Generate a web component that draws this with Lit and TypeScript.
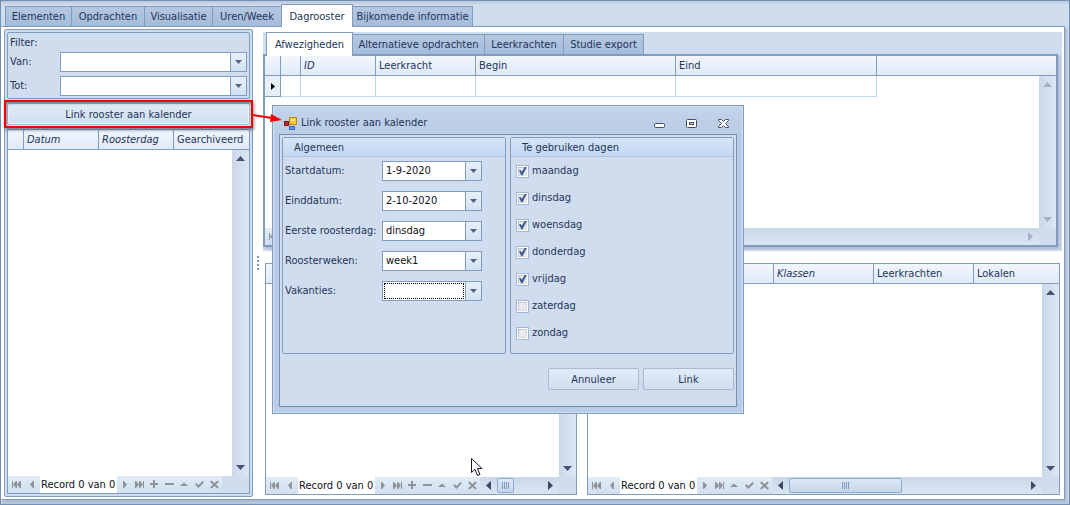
import { LitElement, html, svg, css, nothing, TemplateResult } from "lit";
import { customElement, state } from "lit/decorators.js";
import { classMap } from "lit/directives/class-map.js";
import { styleMap } from "lit/directives/style-map.js";

interface Tab {
  label: string;
  width: number;
}

interface Column {
  label: string;
  width?: number;
  italic?: boolean;
}

const mainTabs: Tab[] = [
  { label: "Elementen", width: 67 },
  { label: "Opdrachten", width: 74 },
  { label: "Visualisatie", width: 69 },
  { label: "Uren/Week", width: 70 },
  { label: "Dagrooster", width: 72 },
  { label: "Bijkomende informatie", width: 121 },
];

const subTabs: Tab[] = [
  { label: "Afwezigheden", width: 87 },
  { label: "Alternatieve opdrachten", width: 133 },
  { label: "Leerkrachten", width: 80 },
  { label: "Studie export", width: 81 },
];

const rosterColumns: Column[] = [
  { label: "", width: 16 },
  { label: "Datum", width: 75, italic: true },
  { label: "Roosterdag", width: 75, italic: true },
  { label: "Gearchiveerd" },
];

const absenceColumns: Column[] = [
  { label: "", width: 16 },
  { label: "", width: 20 },
  { label: "ID", width: 75, italic: true },
  { label: "Leerkracht", width: 100 },
  { label: "Begin", width: 200 },
  { label: "Eind", width: 201 },
  { label: "" },
];

const middleColumns: Column[] = [{ label: "", width: 16 }, { label: "" }];

const lessonColumns: Column[] = [
  { label: "", width: 186 },
  { label: "Klassen", width: 100, italic: true },
  { label: "Leerkrachten", width: 100 },
  { label: "Lokalen" },
];

const dialogFields = [
  { id: "start", label: "Startdatum:", value: "1-9-2020" },
  { id: "end", label: "Einddatum:", value: "2-10-2020" },
  { id: "first", label: "Eerste roosterdag:", value: "dinsdag" },
  { id: "weeks", label: "Roosterweken:", value: "week1" },
  { id: "holidays", label: "Vakanties:", value: "" },
];

const days = [
  { name: "maandag", checked: true },
  { name: "dinsdag", checked: true },
  { name: "woensdag", checked: true },
  { name: "donderdag", checked: true },
  { name: "vrijdag", checked: true },
  { name: "zaterdag", checked: false },
  { name: "zondag", checked: false },
];

const glyphs: Record<string, TemplateResult> = {
  first: svg`<path d="M1 1h1v7h-1zM5 1v7h1v-7zM5 1v7L2 4.500zM9 1v7h1v-7zM9 1v7L6 4.500z"/>`,
  prev: svg`<path d="M7 1v7h-1L3 4.500 6 1z"/>`,
  next: svg`<path d="M4 1v7h1L8 4.500 5 1z"/>`,
  last: svg`<path d="M9 1h1v7h-1zM5 1v7h1L9 4.500 6 1zM1 1v7h1L5 4.500 2 1z"/>`,
  add: svg`<path d="M4 0h2v8h-2zM1 3h8v2h-8z"/>`,
  remove: svg`<path d="M1 3h9v2h-9z"/>`,
  edit: svg`<path d="M1 6L5 2.500 9 6z"/>`,
  accept: svg`<path d="M1 4.500L2.500 3.200 4.500 5 8.500 1 10 2.300 4.500 8z"/>`,
  cancel: svg`<path d="M1 1.800L2.600 0.500 5.500 3.200 8.400 0.500 10 1.800 7 4.500 10 7.400 8.400 8.600 5.500 5.900 2.600 8.600 1 7.400 4 4.500z"/>`,
};

const navTitles: Record<string, string> = {
  first: "Eerste",
  prev: "Vorige",
  next: "Volgende",
  last: "Laatste",
  add: "Toevoegen",
  remove: "Verwijderen",
  edit: "Bewerken",
  accept: "Opslaan",
  cancel: "Annuleren",
};

@customElement("app-root")
export class AppRoot extends LitElement {
  @state() private mainTab = "Dagrooster";
  @state() private subTab = "Afwezigheden";

  static styles = css`
    :host {
      display: block;
      --line: #829cc0;
      --face: #d0ddee;
      --ink: #24355a;
      --glyph: #8f9297;
      --bar: linear-gradient(#c9d8e9, #d9e6f3);
      font: 11px/14px "DejaVu Sans Condensed", "Noto Sans", sans-serif;
      color: var(--ink);
    }
    * {
      box-sizing: border-box;
    }
    button,
    select {
      font: inherit;
      color: inherit;
      margin: 0;
      padding: 0;
      border: 0;
      border-radius: 0;
      background: none;
      appearance: none;
      outline: none;
    }
    svg {
      display: block;
    }
    .window {
      position: relative;
      min-height: 100vh;
      display: flex;
      flex-direction: column;
      border: 1px solid #7390b2;
      background: linear-gradient(#b9c8dc, var(--face) 4px, var(--face) calc(100% - 6px), #b9c8dc);
      overflow: hidden;
    }
    .tabs {
      display: flex;
      align-items: flex-end;
    }
    .tabs.main {
      padding: 3px 0 0 4px;
    }
    .tabs.sub {
      padding-left: 3px;
    }
    .tab {
      height: 20px;
      margin-right: -1px;
      padding-top: 1px;
      border: 1px solid var(--line);
      border-bottom: 0;
      background: linear-gradient(#b4c8e1, #a5bbd8);
      white-space: nowrap;
      flex: none;
    }
    .tab.active {
      height: 23px;
      margin-bottom: -1px;
      background: #fff;
      position: relative;
      z-index: 1;
    }
    .tabs.sub .tab.active {
      margin-bottom: -2px;
      height: 24px;
    }
    .page {
      flex: 1;
      display: grid;
      grid-template-columns: 249px 10px minmax(0, 1fr);
      margin: 0 4px 4px 0;
      padding: 2px;
      background: #fff;
      border: 1px solid var(--line);
      border-left-color: #fff;
      box-shadow: 2px 2px 3px #a8b8ce;
    }
    .side {
      display: flex;
      flex-direction: column;
      gap: 4px;
      padding: 2px;
      border: 1px solid var(--line);
      border-radius: 2px;
      background: var(--face);
    }
    .filter {
      display: grid;
      grid-template-columns: 50px minmax(0, 1fr);
      grid-template-rows: 15px 20px 20px;
      row-gap: 4px;
      align-items: center;
      padding: 0 2px 2px;
      border: 1px solid var(--line);
      border-radius: 2px;
    }
    .filter .heading {
      grid-column: 1 / -1;
      margin-bottom: -4px;
    }
    .combo {
      display: grid;
      grid-template-columns: minmax(0, 1fr) 16px;
      height: 20px;
      border: 1px solid var(--line);
      background: #fff;
    }
    .combo select {
      grid-area: 1 / 1 / 2 / 3;
      padding: 0 18px 0 3px;
      color: #101020;
    }
    .combo .drop {
      grid-area: 1 / 2 / 2 / 3;
      display: grid;
      place-items: center;
      border-left: 1px solid var(--line);
      background: linear-gradient(#e6f0fa, #d3e1f1);
      pointer-events: none;
      fill: #4f6288;
    }
    .combo.focused select {
      margin: 1px 17px 1px 1px;
      border: 1px dotted #000;
    }
    .push {
      height: 22px;
      padding-top: 1px;
      border: 1px solid #a9b9d1;
      border-radius: 2px;
      background: linear-gradient(#e0ecf8, #cfdded);
    }
    .marked {
      position: relative;
      display: grid;
    }
    .marked .push {
      background: linear-gradient(#dfebf7, #d0deee);
      box-shadow: inset 0 0 0 1px #eef4fb;
    }
    .marked::after {
      content: "";
      position: absolute;
      inset: -3px;
      border: 2px solid #f30000;
      box-shadow: 1px 2px 3px rgba(60, 60, 70, 0.6), inset 1px 2px 2px rgba(60, 60, 70, 0.5);
      pointer-events: none;
    }
    .sheet {
      flex: 1;
      min-height: 0;
      display: flex;
      flex-direction: column;
      border: 1px solid var(--line);
      background: #fff;
    }
    .sheet.framed {
      border-width: 2px;
      box-shadow: 2px 2px 3px #a8b8ce;
    }
    .body {
      flex: 1;
      display: grid;
      grid-template-columns: minmax(0, 1fr) 17px;
    }
    table {
      width: 100%;
      border-collapse: separate;
      border-spacing: 0;
      table-layout: fixed;
      align-self: start;
    }
    th {
      height: 20px;
      padding: 0 0 0 3px;
      border-right: 1px solid var(--line);
      border-bottom: 1px solid var(--line);
      background: linear-gradient(#f2f6fd, #dfeaf8);
      font-weight: normal;
      text-align: left;
      white-space: nowrap;
    }
    th:last-child {
      border-right: 0;
    }
    td {
      height: 21px;
      padding: 0;
      border-right: 1px solid #c0d6f6;
      border-bottom: 1px solid #c0d6f6;
    }
    td:first-child {
      border-color: var(--line);
      background: #e6effa;
    }
    td:last-child {
      border: 0;
    }
    td svg {
      margin: 0 auto;
    }
    .italic {
      font-style: italic;
    }
    .vbar {
      grid-column: 2;
      display: flex;
      flex-direction: column;
      align-items: center;
      justify-content: space-between;
      padding: 6px 0;
      background: linear-gradient(90deg, #c9d8e9, #dbe7f3);
      fill: #465277;
    }
    .vbar.disabled,
    .hbar.disabled {
      fill: #a3b2c9;
    }
    .foot {
      display: flex;
      height: 17px;
      background: var(--face);
    }
    .nav {
      display: flex;
      background: linear-gradient(#e0ecf8, #d0dfee);
    }
    .nav button {
      width: 15px;
      display: grid;
      place-items: center;
      fill: var(--glyph);
    }
    .nav button.wide {
      width: 16px;
    }
    .record {
      width: 77px;
      padding-left: 1px;
      background: #fff;
      color: #101020;
      line-height: 18px;
      white-space: nowrap;
    }
    .hbar {
      flex: 1;
      display: flex;
      margin-right: 17px;
      background: var(--bar);
      fill: #3a466c;
    }
    .hbar .end {
      width: 17px;
      display: grid;
      place-items: center;
    }
    .hbar .end:last-child {
      margin-left: auto;
    }
    .thumb {
      margin: 1px 0;
      display: grid;
      place-items: center;
      border: 1px solid #8fa9cf;
      border-radius: 2px;
      background: linear-gradient(#dde9f6, #c5d6ea);
      fill: #7f9bc8;
    }
    .splitter {
      display: grid;
      place-items: center;
      fill: #7f9bc8;
    }
    .work {
      display: flex;
      flex-direction: column;
      padding-top: 3px;
    }
    .upper {
      height: 219px;
      display: flex;
      flex-direction: column;
      padding: 0 4px 4px 0;
      background: var(--face);
    }
    .lower {
      flex: 1;
      display: grid;
      grid-template-columns: 312px minmax(0, 1fr);
      gap: 10px;
      padding: 12px 2px 2px 2px;
    }
    .dialog {
      position: absolute;
      left: 271px;
      top: 104px;
      width: 472px;
      padding: 0 6px 6px;
      border: 1px solid #8299b8;
      background: linear-gradient(#c3d4eb, #b9cce5 28px);
      box-shadow: inset 1px 1px #d0e0f2, inset -1px -1px #d0e0f2;
    }
    .titlebar {
      display: flex;
      align-items: center;
      height: 28px;
      padding: 6px 0 0 5px;
      gap: 4px;
    }
    .titlebar .name {
      flex: 1;
    }
    .titlebar button {
      width: 28px;
      display: grid;
      place-items: center;
    }
    .client {
      padding: 2px 2px 16px;
      border: 1px solid #7390b2;
      background: var(--face);
    }
    .groups {
      display: grid;
      grid-template-columns: 1fr 1fr;
      gap: 4px;
    }
    .group {
      height: 217px;
      border: 1px solid var(--line);
      border-radius: 2px;
    }
    .caption {
      height: 19px;
      padding-left: 11px;
      line-height: 20px;
      border-bottom: 1px solid #aac4e6;
      background: linear-gradient(#d5e5f8, #c4d8f1);
    }
    .fields {
      display: grid;
      grid-template-columns: 97px 100px;
      row-gap: 10px;
      align-items: center;
      padding: 4px 2px;
      white-space: nowrap;
    }
    .days {
      display: flex;
      flex-direction: column;
      gap: 13px;
      padding: 7px 5px;
    }
    .day {
      display: flex;
      align-items: center;
      gap: 3px;
      height: 14px;
    }
    .day input {
      width: 13px;
      height: 13px;
      margin: 0;
      appearance: none;
      border: 1px solid #9fb8dc;
      background: linear-gradient(135deg, #b6bac2, #e4e5e8) content-box, #fff;
      padding: 1px;
      display: grid;
      outline: none;
    }
    .day input::before,
    .day input::after {
      content: "";
      grid-area: 1 / 1;
      margin: 1px;
      background: #e9eaed;
    }
    .day input:checked::after {
      margin: 0;
      background: #3f5f92;
      clip-path: polygon(10% 42%, 30% 38%, 42% 58%, 76% 4%, 98% 4%, 52% 98%, 36% 98%);
    }
    .actions {
      display: flex;
      justify-content: flex-end;
      gap: 4px;
      margin-top: 14px;
    }
    .actions .push {
      width: 91px;
    }
    .pointer,
    .link-arrow {
      position: absolute;
      pointer-events: none;
    }
    .link-arrow {
      left: 251px;
      top: 108px;
    }
    .pointer {
      left: 469px;
      top: 456px;
    }
  `;

  private tabs(kind: string, items: Tab[], current: string, pick: (label: string) => void) {
    return html`<div class="tabs ${kind}" role="tablist">
      ${items.map(
        (t) => html`<button
          role="tab"
          class=${classMap({ tab: true, active: t.label === current })}
          style=${styleMap({ width: `${t.width}px` })}
          aria-selected=${t.label === current}
          @click=${() => pick(t.label)}
        >${t.label}</button>`
      )}
    </div>`;
  }

  private combo(id: string, value = "", focused = false) {
    return html`<div class=${classMap({ combo: true, focused })}>
      <select id=${id}><option>${value}</option></select>
      <span class="drop"><svg width="7" height="4"><path d="M0 0h7L3.500 4z" /></svg></span>
    </div>`;
  }

  private colgroup(columns: Column[]) {
    return html`${columns.map((c) => html`<col style=${styleMap(c.width ? { width: `${c.width}px` } : {})} />`)}`;
  }

  private table(columns: Column[]) {
    return html`<table>
      <colgroup>${this.colgroup(columns)}</colgroup>
      <thead>
        <tr>${columns.map((c) => html`<th class=${classMap({ italic: !!c.italic })}>${c.label}</th>`)}</tr>
      </thead>
    </table>`;
  }

  private emptyRow(columns: Column[]) {
    return html`<table>
      <colgroup>${this.colgroup(columns)}</colgroup>
      <tbody><tr>
        ${columns.map(
          (_, i) => html`<td>${i === 0 ? html`<svg width="4" height="7"><path d="M0 0L4 3.500 0 7z" /></svg>` : nothing}</td>`
        )}
      </tr></tbody>
    </table>`;
  }

  private vbar(disabled = false) {
    return html`<div class=${classMap({ vbar: true, disabled })}>
      <svg width="9" height="5"><path d="M0 5L4.500 0 9 5z" /></svg>
      <svg width="9" height="5"><path d="M0 0h9L4.500 5z" /></svg>
    </div>`;
  }

  private hbar(thumb: number, disabled = false) {
    return html`<div class=${classMap({ hbar: true, disabled })}>
      <span class="end"><svg width="5" height="9"><path d="M5 0v9L0 4.500z" /></svg></span>
      ${thumb
        ? html`<span class="thumb" style=${styleMap({ width: `${thumb}px` })}>
            <svg width="8" height="7"><path d="M0 0h1v7h-1zM2 0h1v7h-1zM4 0h1v7h-1zM6 0h1v7h-1z" /></svg>
          </span>`
        : nothing}
      <span class="end"><svg width="5" height="9"><path d="M0 0L5 4.500 0 9z" /></svg></span>
    </div>`;
  }

  private nav(tools: string[]) {
    const button = (name: string, wide = false) => html`<button class=${classMap({ wide })} aria-label=${navTitles[name]}>
      <svg width="11" height="9">${glyphs[name]}</svg>
    </button>`;
    return html`<div class="nav">
      ${button("first", true)}${button("prev", true)}
      <span class="record">Record 0 van 0</span>
      ${["next", "last", ...tools].map((n) => button(n))}
    </div>`;
  }

  private dialog() {
    return html`<section class="dialog" role="dialog" aria-label="Link rooster aan kalender">
      <div class="titlebar">
        <svg width="13" height="13">
          <rect x="0.500" y="4.500" width="4" height="4" fill="#c4281c" stroke="#7d1a12" />
          <rect x="5.500" y="0.500" width="7" height="7" fill="#f7c62f" stroke="#b98a1a" />
          <path d="M7 2h4v2h-4z" fill="#fdea9a" />
          <rect x="5.500" y="9.500" width="5" height="3" fill="#5f93e6" stroke="#3d6bc0" />
        </svg>
        <span class="name">Link rooster aan kalender</span>
        <button aria-label="Minimaliseren">
          <svg width="11" height="9"><rect x="0.500" y="4.500" width="10" height="4" rx="1" fill="#fff" stroke="#454e66" /></svg>
        </button>
        <button aria-label="Maximaliseren">
          <svg width="11" height="9">
            <rect x="0.500" y="0.500" width="10" height="8" rx="1" fill="#fff" stroke="#454e66" />
            <rect x="3.500" y="3.500" width="4" height="2" fill="#c3d4eb" stroke="#454e66" />
          </svg>
        </button>
        <button aria-label="Sluiten">
          <svg width="11" height="9">
            <path d="M0.500 0.500h3L5.500 2.500 7.500 0.500h3v1L7.500 4.500 10.500 7.500v1h-3L5.500 6.500 3.500 8.500h-3v-1L3.500 4.500 0.500 1.500z" fill="#fff" stroke="#454e66" />
          </svg>
        </button>
      </div>
      <div class="client">
        <div class="groups">
          <div class="group" role="group" aria-label="Algemeen">
            <div class="caption">Algemeen</div>
            <div class="fields">
              ${dialogFields.map(
                (f) => html`<label for=${f.id}>${f.label}</label>${this.combo(f.id, f.value, f.id === "holidays")}`
              )}
            </div>
          </div>
          <div class="group" role="group" aria-label="Te gebruiken dagen">
            <div class="caption">Te gebruiken dagen</div>
            <div class="days">
              ${days.map((d) => html`<label class="day"><input type="checkbox" .checked=${d.checked} />${d.name}</label>`)}
            </div>
          </div>
        </div>
        <div class="actions">
          <button class="push">Annuleer</button>
          <button class="push">Link</button>
        </div>
      </div>
    </section>`;
  }

  render() {
    return html`<main class="window">
      ${this.tabs("main", mainTabs, this.mainTab, (l) => (this.mainTab = l))}
      <div class="page">
        <aside class="side">
          <div class="filter">
            <span class="heading">Filter:</span>
            <label for="from">Van:</label>${this.combo("from")}
            <label for="to">Tot:</label>${this.combo("to")}
          </div>
          <div class="marked"><button class="push">Link rooster aan kalender</button></div>
          <div class="sheet">
            ${this.table(rosterColumns)}
            <div class="body">${this.vbar()}</div>
            <div class="foot">${this.nav(["add", "remove", "edit", "accept", "cancel"])}</div>
          </div>
        </aside>
        <div class="splitter">
          <svg width="2" height="14"><path d="M0 0h2v2h-2zM0 4h2v2h-2zM0 8h2v2h-2zM0 12h2v2h-2z" /></svg>
        </div>
        <div class="work">
          <div class="upper">
            ${this.tabs("sub", subTabs, this.subTab, (l) => (this.subTab = l))}
            <div class="sheet framed">
              ${this.table(absenceColumns)}
              <div class="body">${this.emptyRow(absenceColumns)}${this.vbar(true)}</div>
              <div class="foot">${this.nav(["add", "remove", "edit", "accept", "cancel"])}${this.hbar(0, true)}</div>
            </div>
          </div>
          <div class="lower">
            <div class="sheet">
              ${this.table(middleColumns)}
              <div class="body">${this.vbar()}</div>
              <div class="foot">${this.nav(["add", "remove", "edit", "accept", "cancel"])}${this.hbar(17)}</div>
            </div>
            <div class="sheet">
              ${this.table(lessonColumns)}
              <div class="body">${this.vbar()}</div>
              <div class="foot">${this.nav(["edit", "accept", "cancel"])}${this.hbar(113)}</div>
            </div>
          </div>
        </div>
      </div>
      ${this.dialog()}
      <svg class="link-arrow" width="32" height="16">
        <path d="M1 6L20 9" stroke="#f30000" stroke-width="2" />
        <path d="M19 5L30 11 18 13z" fill="#f30000" />
      </svg>
      <svg class="pointer" width="13" height="20">
        <path d="M1.500 1.500v14L5 12.300 7.500 18.500 10 17.500 7.500 11.500h4.500z" fill="#fff" stroke="#1a1a2a" />
      </svg>
    </main>`;
  }
}
